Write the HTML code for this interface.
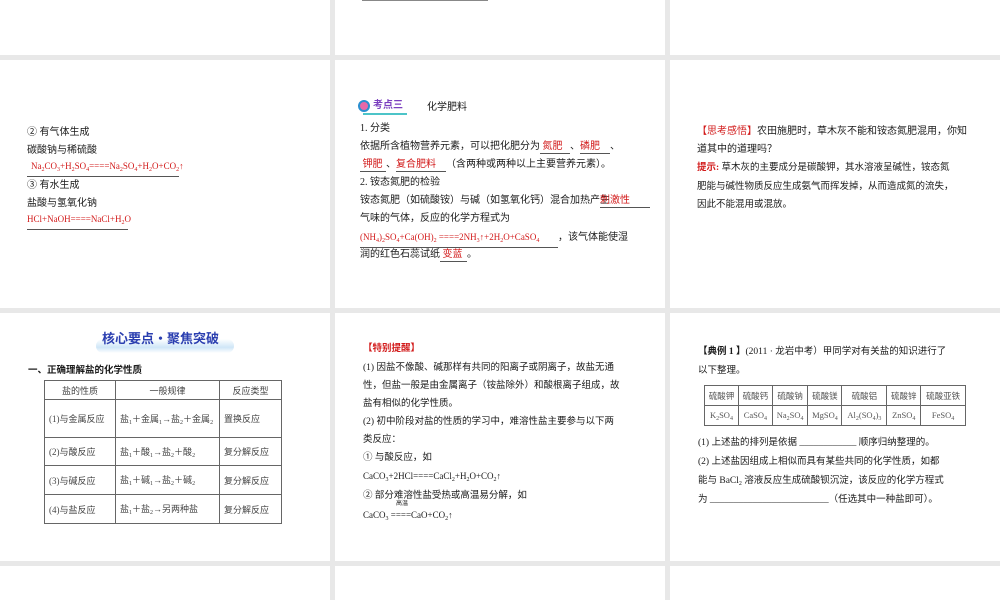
<!DOCTYPE html>
<html><head><meta charset="utf-8"><style>
*{margin:0;padding:0;box-sizing:border-box}
body{width:1000px;height:600px;background:#e8e8e8;position:relative;overflow:hidden;font-family:"Liberation Serif","Noto Sans CJK SC",sans-serif;color:#1a1a1a}
.s{position:absolute;background:#fff;overflow:hidden}
.t{position:absolute;white-space:nowrap;font-size:10px;line-height:12px}
.r{color:#d21a1a}
.u{border-bottom:1px solid #555;display:inline-block}
.b{font-weight:bold}
table{border-collapse:collapse;position:absolute;font-size:9px;color:#444}
td{border:1px solid #666;padding:0 4px;vertical-align:middle}
sub{font-size:6px;vertical-align:-2px}
</style></head><body>
<!-- row 1 -->
<div class="s" style="left:0;top:0;width:330px;height:55px"></div>
<div class="s" style="left:335px;top:0;width:330px;height:55px"><div style="position:absolute;left:27px;top:0;width:126px;height:1px;background:#888"></div></div>
<div class="s" style="left:670px;top:0;width:330px;height:55px"></div>
<!-- row 2 -->
<div class="s" style="left:0;top:60px;width:330px;height:248px">
<div class="t" style="left:27px;top:67px">② 有气体生成</div>
<div class="t" style="left:27px;top:85px">碳酸钠与稀硫酸</div>
<div class="t r" style="left:27px;top:100px;width:152px;border-bottom:1px solid #555;padding-left:4px;font-size:9px">Na<sub>2</sub>CO<sub>3</sub>+H<sub>2</sub>SO<sub>4</sub>====Na<sub>2</sub>SO<sub>4</sub>+H<sub>2</sub>O+CO<sub>2</sub>↑</div>
<div class="t" style="left:27px;top:120px">③ 有水生成</div>
<div class="t" style="left:27px;top:138px">盐酸与氢氧化钠</div>
<div class="t r" style="left:27px;top:153px;width:101px;border-bottom:1px solid #555;font-size:9px">HCl+NaOH====NaCl+H<sub>2</sub>O</div>
</div>
<div class="s" style="left:335px;top:60px;width:330px;height:248px">
<div style="position:absolute;left:23px;top:40px;width:12px;height:12px;border:2px solid #2a8fd0;border-radius:50%;background:#e868a8"></div>
<div class="t b" style="left:38px;top:40px;color:#7b3fbf;font-size:10px">考点三</div>
<div style="position:absolute;left:28px;top:53px;width:44px;height:2px;background:#4cc4c8"></div>
<div class="t" style="left:92px;top:42px">化学肥料</div>
<div class="t" style="left:25px;top:63px">1. 分类</div>
<div class="t" style="left:25px;top:81px">依据所含植物营养元素，可以把化肥分为<span class="u r" style="width:30px">&nbsp;氮肥</span>、<span class="u r" style="width:30px">磷肥</span>、</div>
<div class="t" style="left:25px;top:99px"><span class="u r" style="width:26px">&nbsp;钾肥</span>、<span class="u r" style="width:50px">复合肥料</span>（含两种或两种以上主要营养元素）。</div>
<div class="t" style="left:25px;top:117px">2. 铵态氮肥的检验</div>
<div class="t" style="left:25px;top:135px">铵态氮肥（如硫酸铵）与碱（如氢氧化钙）混合加热产生<span class="u r" style="width:50px;margin-left:-10px">刺激性</span></div>
<div class="t" style="left:25px;top:153px">气味的气体，反应的化学方程式为</div>
<div class="t r" style="left:25px;top:171px;font-size:9px"><span class="u" style="width:198px">(NH<sub>4</sub>)<sub>2</sub>SO<sub>4</sub>+Ca(OH)<sub>2</sub> ====2NH<sub>3</sub>↑+2H<sub>2</sub>O+CaSO<sub>4</sub></span><span style="color:#1a1a1a;font-size:10px">，该气体能使湿</span></div>
<div class="t" style="left:25px;top:189px">润的红色石蕊试纸<span class="u r" style="width:27px">&nbsp;变蓝</span>。</div>
</div>
<div class="s" style="left:670px;top:60px;width:330px;height:248px">
<div class="t" style="left:27px;top:66px"><span class="r">【思考感悟】</span>农田施肥时，草木灰不能和铵态氮肥混用，你知</div>
<div class="t" style="left:27px;top:84px">道其中的道理吗？</div>
<div class="t" style="left:27px;top:102px;font-size:9.5px"><span class="r b">提示:</span> 草木灰的主要成分是碳酸钾，其水溶液呈碱性，铵态氮</div>
<div class="t" style="left:27px;top:121px;font-size:9.5px">肥能与碱性物质反应生成氨气而挥发掉，从而造成氮的流失，</div>
<div class="t" style="left:27px;top:139px;font-size:9.5px">因此不能混用或混放。</div>
</div>
<!-- row 3 -->
<div class="s" style="left:0;top:313px;width:330px;height:248px">
<div style="position:absolute;left:96px;top:26px;width:138px;height:14px;border-radius:8px;background:linear-gradient(#fff,#cfe6f7 60%,#fff)"></div>
<div class="t b" style="left:102px;top:17px;font-size:13px;line-height:16px;color:#2b3fb0;font-family:'Noto Sans CJK SC',sans-serif">核心要点·聚焦突破</div>
<div class="t b" style="left:28px;top:50px;font-family:'Noto Sans CJK SC',sans-serif;font-size:9.5px">一、正确理解盐的化学性质</div>
<table style="left:44px;top:67px;width:238px">
<tr style="height:19px"><td style="width:71px;text-align:center">盐的性质</td><td style="width:104px;text-align:center">一般规律</td><td style="text-align:center">反应类型</td></tr>
<tr style="height:38px"><td>(1)与金属反应</td><td>盐<sub>1</sub>＋金属<sub>1</sub>→盐<sub>2</sub>＋金属<sub>2</sub></td><td>置换反应</td></tr>
<tr style="height:28px"><td>(2)与酸反应</td><td>盐<sub>1</sub>＋酸<sub>1</sub>→盐<sub>2</sub>＋酸<sub>2</sub></td><td>复分解反应</td></tr>
<tr style="height:29px"><td>(3)与碱反应</td><td>盐<sub>1</sub>＋碱<sub>1</sub>→盐<sub>2</sub>＋碱<sub>2</sub></td><td>复分解反应</td></tr>
<tr style="height:29px"><td>(4)与盐反应</td><td>盐<sub>1</sub>＋盐<sub>2</sub>→另两种盐</td><td>复分解反应</td></tr>
</table>
</div>
<div class="s" style="left:335px;top:313px;width:330px;height:248px">
<div class="t r b" style="left:28px;top:30px;font-size:9.5px">【特别提醒】</div>
<div class="t" style="left:28px;top:49px;font-size:9.5px">(1) 因盐不像酸、碱那样有共同的阳离子或阴离子，故盐无通</div>
<div class="t" style="left:28px;top:67px;font-size:9.5px">性，但盐一般是由金属离子（铵盐除外）和酸根离子组成，故</div>
<div class="t" style="left:28px;top:85px;font-size:9.5px">盐有相似的化学性质。</div>
<div class="t" style="left:28px;top:103px;font-size:9.5px">(2) 初中阶段对盐的性质的学习中，难溶性盐主要参与以下两</div>
<div class="t" style="left:28px;top:121px;font-size:9.5px">类反应：</div>
<div class="t" style="left:28px;top:139px;font-size:9.5px">① 与酸反应，如</div>
<div class="t" style="left:28px;top:157px;font-size:9px">CaCO<sub>3</sub>+2HCl====CaCl<sub>2</sub>+H<sub>2</sub>O+CO<sub>2</sub>↑</div>
<div class="t" style="left:28px;top:177px;font-size:9.5px">② 部分难溶性盐受热或高温易分解，如</div>
<div class="t" style="left:61px;top:188px;font-size:6px;line-height:7px">高温</div>
<div class="t" style="left:28px;top:196px;font-size:9px">CaCO<sub>3</sub> ====CaO+CO<sub>2</sub>↑</div>
</div>
<div class="s" style="left:670px;top:313px;width:330px;height:248px">
<div class="t" style="left:28px;top:33px;font-size:9.5px"><b>【典例 1 】</b>(2011 · 龙岩中考）甲同学对有关盐的知识进行了</div>
<div class="t" style="left:28px;top:52px;font-size:9.5px">以下整理。</div>
<table style="left:34px;top:72px;width:262px;font-size:8.5px;color:#555;text-align:center">
<tr style="height:20px"><td style="padding:0">硫酸钾</td><td style="padding:0">硫酸钙</td><td style="padding:0">硫酸钠</td><td style="padding:0">硫酸镁</td><td style="padding:0">硫酸铝</td><td style="padding:0">硫酸锌</td><td style="padding:0">硫酸亚铁</td></tr>
<tr style="height:20px"><td style="padding:0">K<sub>2</sub>SO<sub>4</sub></td><td style="padding:0">CaSO<sub>4</sub></td><td style="padding:0">Na<sub>2</sub>SO<sub>4</sub></td><td style="padding:0">MgSO<sub>4</sub></td><td style="padding:0">Al<sub>2</sub>(SO<sub>4</sub>)<sub>3</sub></td><td style="padding:0">ZnSO<sub>4</sub></td><td style="padding:0">FeSO<sub>4</sub></td></tr>
</table>
<div class="t" style="left:28px;top:124px;font-size:9.5px">(1) 上述盐的排列是依据 ____________ 顺序归纳整理的。</div>
<div class="t" style="left:28px;top:143px;font-size:9.5px">(2) 上述盐因组成上相似而具有某些共同的化学性质，如都</div>
<div class="t" style="left:28px;top:162px;font-size:9.5px">能与 BaCl<sub>2</sub> 溶液反应生成硫酸钡沉淀，该反应的化学方程式</div>
<div class="t" style="left:28px;top:181px;font-size:9.5px">为 _________________________（任选其中一种盐即可）。</div>
</div>
<!-- row 4 -->
<div class="s" style="left:0;top:566px;width:330px;height:34px"></div>
<div class="s" style="left:335px;top:566px;width:330px;height:34px"></div>
<div class="s" style="left:670px;top:566px;width:330px;height:34px"></div>
</body></html>
